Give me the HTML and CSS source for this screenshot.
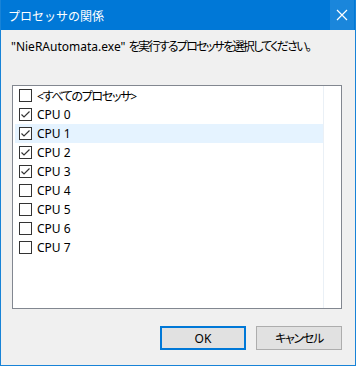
FILE: index.html
```html
<!DOCTYPE html>
<html lang="ja">
  <head>
    <meta charset="UTF-8" />
    <title>プロセッサの関係</title>
    <link rel="stylesheet" href="styles.css">
  </head>
  <body>
    <div class="window">
      <div class="titlebar">
        <span class="title">プロセッサの関係</span>
        <span class="close">
          <svg width="12" height="12" viewBox="0 0 12 12"><path d="M1 1L11 11M11 1L1 11" stroke="#fff" stroke-width="1.2" fill="none"/></svg>
        </span>
      </div>
      <p class="prompt">"NieRAutomata.exe" <span class="ja tight">を実行するプロセッサを選択してください。</span></p>
      <div class="listbox">
        <div class="rows">
          <div class="row"><span class="box"></span><span class="ja">&lt;すべてのプロセッサ&gt;</span></div>
          <div class="row"><span class="box checked"></span>CPU 0</div>
          <div class="row hover"><span class="box checked"></span>CPU 1</div>
          <div class="row"><span class="box checked"></span>CPU 2</div>
          <div class="row"><span class="box checked"></span>CPU 3</div>
          <div class="row"><span class="box"></span>CPU 4</div>
          <div class="row"><span class="box"></span>CPU 5</div>
          <div class="row"><span class="box"></span>CPU 6</div>
          <div class="row"><span class="box"></span>CPU 7</div>
        </div>
      </div>
      <div class="buttons">
        <button class="btn default">OK</button>
        <button class="btn"><span class="ja">キャンセル</span></button>
      </div>
    </div>
  </body>
</html>
```

FILE: styles.css
```css
body {
  margin: 0;
  font-family: "Noto Sans", "Noto Sans CJK JP", sans-serif;
  font-size: 12px;
  color: #000;
}
.window {
  width: 356px;
  height: 366px;
  box-sizing: border-box;
  border: 1px solid #1883d7;
  border-top: none;
  background: #f0f0f0;
}
.titlebar {
  height: 30px;
  background: #0078d7;
  display: flex;
  align-items: center;
  justify-content: space-between;
  padding-left: 7px;
}
.title {
  color: #fff;
  font-family: "Noto Sans CJK JP", sans-serif;
  font-size: 12px;
}
.close {
  width: 24px;
  height: 30px;
  margin-right: 1px;
  background: #1a86db;
  display: flex;
  align-items: center;
  justify-content: center;
}
.ja {
  font-feature-settings: "palt";
  letter-spacing: -1.3px;
}
.ja.tight {
  letter-spacing: -1.7px;
}
.prompt {
  margin: 9px 0 0 10px;
  height: 46px;
  line-height: 16px;
}
.listbox {
  margin: 0 13px 0 11px;
  height: 224px;
  box-sizing: border-box;
  border: 1px solid #828790;
  background: #fff;
}
.rows {
  width: 308px;
  height: 100%;
  margin-left: 2px;
  border-right: 1px solid #eaf0f6;
}
.row {
  height: 19px;
  display: flex;
  align-items: center;
  padding-left: 4px;
}
.row.hover {
  background: #e5f3ff;
}
.box {
  width: 13px;
  height: 13px;
  box-sizing: border-box;
  border: 1px solid #333;
  background: #fff;
  margin-right: 5px;
}
.box.checked {
  background: #fff url("data:image/svg+xml,%3Csvg xmlns='http://www.w3.org/2000/svg' width='11' height='11'%3E%3Cpath d='M1.5 5.5L4 8L9.5 2.5' stroke='%23333' stroke-width='1.2' fill='none'/%3E%3C/svg%3E") no-repeat center;
}
.buttons {
  display: flex;
  justify-content: flex-end;
  gap: 10px;
  margin: 17px 13px 0 0;
}
.btn {
  width: 86px;
  height: 24px;
  box-sizing: border-box;
  border: 1px solid #adadad;
  background: #e1e1e1;
  font-family: "Noto Sans", "Noto Sans CJK JP", sans-serif;
  font-size: 12px;
  color: #000;
  padding: 0;
}
.btn.default {
  border: 2px solid #0078d7;
}
```
